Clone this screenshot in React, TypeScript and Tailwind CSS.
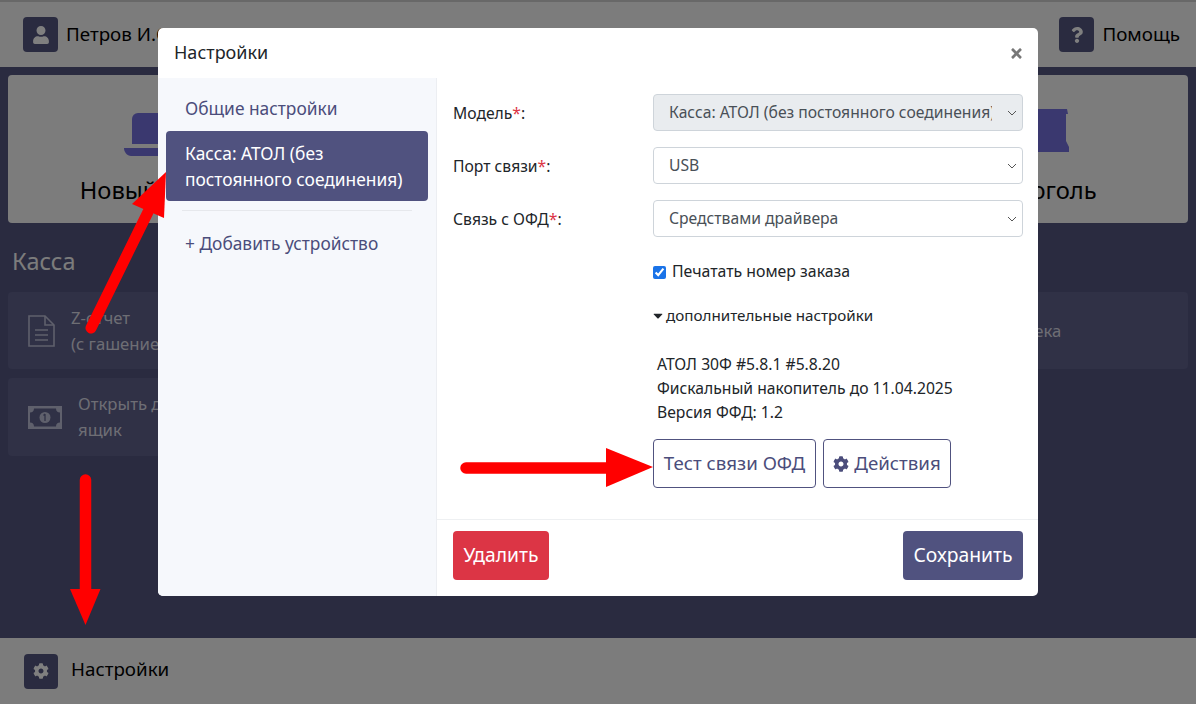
import { FaCaretDown, FaCog, FaQuestion, FaTimes, FaUser } from 'react-icons/fa';

const ChevronIcon = () => (
  <svg className="pointer-events-none absolute right-[6px] top-1/2 h-[6px] w-[10px] -translate-y-1/2" viewBox="0 0 10 6" fill="none">
    <path d="M1 1l4 4 4-4" stroke="#555" strokeWidth="1" />
  </svg>
);

const LaptopIcon = () => (
  <svg className="h-[43px] w-[58px]" viewBox="0 0 58 43" fill="#7470de">
    <path d="M14 0H44A6 6 0 0 1 50 6V31H8V6A6 6 0 0 1 14 0Z" />
    <path d="M0 35H58C58 39 55 43 51 43H7C3 43 0 39 0 35Z" />
  </svg>
);

const RegisterIcon = () => (
  <svg className="h-[43px] w-[52px]" viewBox="0 0 52 43" fill="#7470de">
    <path d="M3 0H49L50 5H48V32L51 38V43H1V38L4 32V5H2Z" />
  </svg>
);

const DocIcon = () => (
  <svg className="h-[32px] w-[27px] shrink-0" viewBox="0 0 27 32" fill="none" stroke="#bec0d8" strokeWidth="1.6">
    <path d="M1 1H17L26 10V31H1Z" />
    <path d="M17 1V10H26" />
    <path d="M7 15H20M7 20H20M7 25H20" />
  </svg>
);

const MoneyIcon = () => (
  <svg className="h-[23px] w-[34px] shrink-0" viewBox="0 0 34 23">
    <path fill="#bec0d8" d="M0 0H34V23H0Z" />
    <path fill="#60628c" d="M6 2.500H28C28 5 29.500 6.500 32 6.500V16.500C29.500 16.500 28 18 28 20.500H6C6 18 4.500 16.500 2 16.500V6.500C4.500 6.500 6 5 6 2.500Z" />
    <circle cx="17" cy="11.500" r="5.500" fill="#bec0d8" />
    <path d="M17 8V15M15.500 9.500L17 8" stroke="#60628c" strokeWidth="1.300" fill="none" />
  </svg>
);

const SelectRow = ({ label, value, disabled }: { label: string; value: string; disabled?: boolean }) => (
  <div className="mb-4 flex items-center">
    <div className="w-[200px] pt-[2px] text-[15.700px] text-[#212529]">
      {label}
      <span className="text-[#dc3545]">*</span>:
    </div>
    <div className="relative w-[370px]">
      <select
        disabled={disabled}
        defaultValue={value}
        className={`h-[37px] w-full appearance-none rounded-[4px] border border-[#ced4da] pl-[15px] pr-[30px] pt-[1px] text-[15.700px] text-[#495057] opacity-100 ${disabled ? 'bg-[#e9ecef]' : 'bg-white'}`}
      >
        <option>{value}</option>
      </select>
      <ChevronIcon />
    </div>
  </div>
);

const Arrows = () => (
  <svg className="pointer-events-none absolute inset-0 h-full w-full" viewBox="0 0 1196 704" fill="none">
    <path d="M91 328L148 212" stroke="#ff0000" strokeWidth="11" strokeLinecap="round" />
    <path d="M132 204L166 172L164 218Z" fill="#ff0000" />
    <path d="M466 468H610" stroke="#ff0000" strokeWidth="11.500" strokeLinecap="round" />
    <path d="M606 448L653 467L606 487Z" fill="#ff0000" />
    <path d="M85.500 480V592" stroke="#ff0000" strokeWidth="11.500" strokeLinecap="round" />
    <path d="M70 589H100.500L85.500 625Z" fill="#ff0000" />
  </svg>
);

const App = () => {
  return (
    <div className="relative flex h-screen flex-col overflow-hidden bg-[#545681] font-['Noto_Sans',sans-serif]">
      {/* page under the dialog */}
      <header className="flex h-[67px] shrink-0 items-center justify-between border-t-2 border-[#d0d0d0] bg-[#f8f8f8] pl-[23px] pr-[16px] text-black">
        <div className="flex items-center gap-2">
          <span className="flex h-[35px] w-[35px] items-center justify-center rounded-[4px] bg-[#545681] text-[18px] text-white">
            <FaUser />
          </span>
          <span className="text-[18.800px]">Петров И.С.</span>
        </div>
        <div className="flex items-center gap-2">
          <span className="flex h-[35px] w-[35px] items-center justify-center rounded-[4px] bg-[#545681] text-[16px] text-white">
            <FaQuestion />
          </span>
          <span className="text-[18.800px]">Помощь</span>
        </div>
      </header>

      <main className="flex-1 px-2 pt-2">
        <div className="grid grid-cols-4 gap-2">
          <div className="flex h-[148px] flex-col items-center rounded-[4px] bg-[#f8f8f8] pt-[38px] text-black">
            <LaptopIcon />
            <div className="mt-[16px] text-[23.700px] leading-[36px]">Новый заказ</div>
          </div>
          <div className="h-[148px] rounded-[4px] bg-[#f8f8f8]" />
          <div className="h-[148px] rounded-[4px] bg-[#f8f8f8]" />
          <div className="flex h-[148px] flex-col items-center rounded-[4px] bg-[#f8f8f8] pt-[34px] text-black">
            <RegisterIcon />
            <div className="mt-[20px] text-[23.700px] leading-[36px]">Алкоголь</div>
          </div>
        </div>

        <h2 className="mt-[20px] pl-1 text-[23.500px] leading-[36px] text-[#f8f8f8]">Касса</h2>

        <div className="mt-[13px] grid grid-cols-4 gap-x-2 gap-y-[9px] text-[16.700px] leading-[26px] text-[#dcdce8]">
          <div className="flex h-[77px] items-center gap-[16px] rounded-[4px] bg-[#60628c] pl-5">
            <DocIcon />
            <div>
              Z-отчет
              <br />
              (с гашением)
            </div>
          </div>
          <div className="h-[77px] rounded-[4px] bg-[#60628c]" />
          <div className="h-[77px] rounded-[4px] bg-[#60628c]" />
          <div className="flex h-[77px] items-center rounded-[4px] bg-[#60628c] pl-[71px]">
            <div>Копия чека</div>
          </div>
          <div className="flex h-[78px] items-center gap-[16px] rounded-[4px] bg-[#60628c] pl-5">
            <MoneyIcon />
            <div>
              Открыть денежный
              <br />
              ящик
            </div>
          </div>
        </div>
      </main>

      <footer className="flex h-[66px] shrink-0 items-center gap-[13px] bg-[#f8f8f8] pl-[24px] text-black">
        <span className="flex h-[35px] w-[34px] items-center justify-center rounded-[4px] bg-[#545681] text-[16px] text-white">
          <FaCog />
        </span>
        <span className="pb-[3px] text-[18.800px]">Настройки</span>
      </footer>

      {/* settings dialog */}
      <div className="absolute inset-0 bg-black/50 pt-[28px]">
        <div className="mx-auto flex h-[568px] w-[880px] flex-col overflow-hidden rounded-[5px] bg-white">
          <div className="flex h-[50px] shrink-0 items-center justify-between pl-4 pr-[14px]">
            <h5 className="pb-[2px] text-[18px] text-[#212529]">Настройки</h5>
            <FaTimes className="text-[15px] text-[#777]" />
          </div>
          <div className="flex min-h-0 flex-1">
            <aside className="w-[279px] shrink-0 border-r border-[#eceef2] bg-[#f6f8fc] px-2 pt-[15px] text-[17.350px] text-[#4b4d7b]">
              <div className="pl-[19px] leading-[30px]">Общие настройки</div>
              <div className="mt-[8px] h-[70px] w-[262px] rounded-[4px] bg-[#50527f] pl-[19px] pt-[9px] leading-[26px] text-white">
                Касса: АТОЛ (без постоянного соединения)
              </div>
              <hr className="mx-4 mt-[9px] border-[#e6e8ec]" />
              <div className="mt-[17px] pl-[19px] leading-[30px]">+ Добавить устройство</div>
            </aside>
            <section className="flex min-w-0 flex-1 flex-col">
              <div className="h-[442px] shrink-0 border-b border-[#eef0f2] pl-4 pt-4">
                <SelectRow label="Модель" value="Касса: АТОЛ (без постоянного соединения)" disabled />
                <SelectRow label="Порт связи" value="USB" />
                <SelectRow label="Связь с ОФД" value="Средствами драйвера" />
                <div className="ml-[200px] text-[15.700px] text-[#212529]">
                  <label className="mt-[24px] flex h-[22px] items-center gap-[6px] text-[15.850px]">
                    <input type="checkbox" defaultChecked className="h-[13px] w-[13px] accent-[#1a73e8]" />
                    Печатать номер заказа
                  </label>
                  <div className="mt-[21px] flex h-[22px] items-center gap-[3px] text-[15.200px]">
                    <FaCaretDown className="h-[15px] w-[10px]" />
                    дополнительные настройки
                  </div>
                  <div className="mt-[26px] pl-1 leading-[24px]">
                    <div>АТОЛ 30Ф #5.8.1 #5.8.20</div>
                    <div>Фискальный накопитель до 11.04.2025</div>
                    <div>Версия ФФД: 1.2</div>
                  </div>
                  <div className="mt-[15px] flex gap-[7px] text-[18.700px] text-[#4b4d7b]">
                    <button className="h-[49px] w-[163px] rounded-[4px] border border-[#50527f]">Тест связи ОФД</button>
                    <button className="flex h-[49px] w-[128px] items-center justify-center gap-[5px] rounded-[4px] border border-[#50527f]">
                      <FaCog className="text-[16px]" />
                      Действия
                    </button>
                  </div>
                </div>
              </div>
              <div className="flex flex-1 items-start justify-between pl-4 pr-[15px] pt-[11px] text-[19.300px] text-white">
                <button className="h-[49px] w-[96px] rounded-[4px] bg-[#dc3545]">Удалить</button>
                <button className="h-[49px] w-[120px] rounded-[4px] bg-[#50527f]">Сохранить</button>
              </div>
            </section>
          </div>
        </div>
      </div>

      <Arrows />
    </div>
  );
};

export default App;
